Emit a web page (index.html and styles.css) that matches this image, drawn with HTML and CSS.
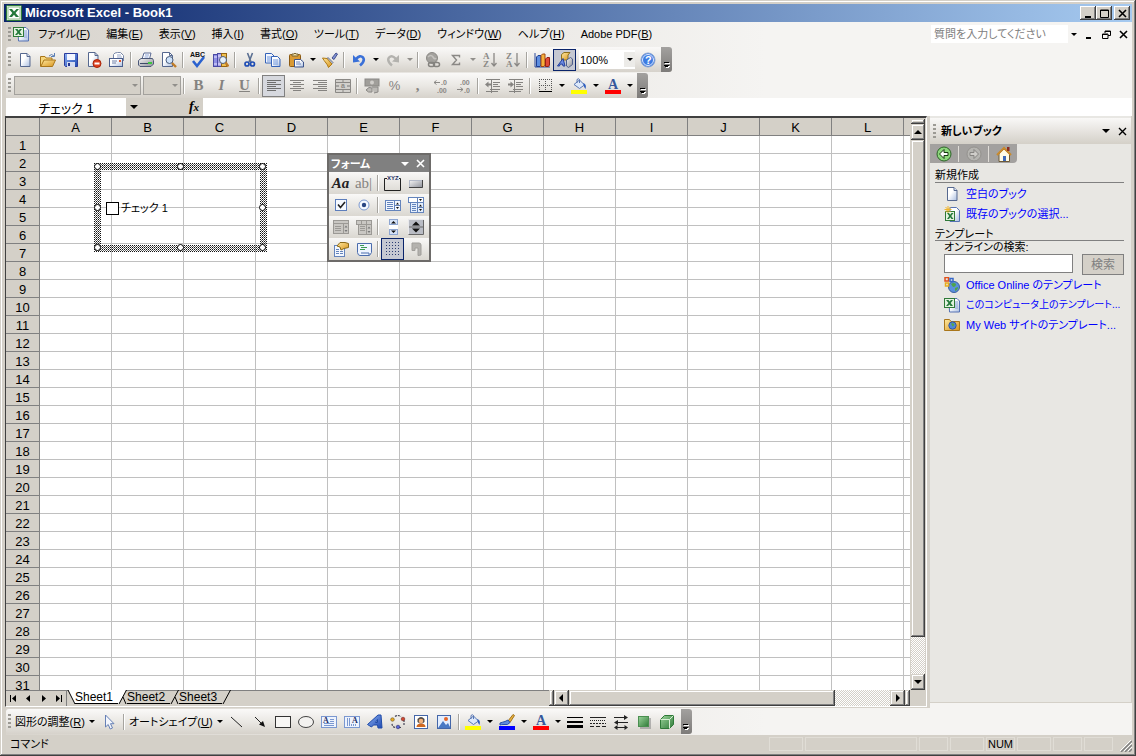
FILE: index.html
```html
<!DOCTYPE html>
<html lang="ja">
<head>
  <meta charset="UTF-8" />
  <meta name="viewport" content="width=device-width, initial-scale=1" />
  <title>Microsoft Excel - Book1</title>
  <link rel="stylesheet" href="styles.css">
</head>
<body>
  <!-- icon set -->
  <svg class="defs" width="0" height="0" aria-hidden="true">
    <defs>
      <linearGradient id="g-page" x1="0" y1="0" x2="1" y2="1"><stop offset=".4" stop-color="#fff"/><stop offset="1" stop-color="#a9bde0"/></linearGradient>
      <linearGradient id="g-blue" x1="0" y1="0" x2="1" y2="1"><stop offset="0" stop-color="#8fb4f5"/><stop offset="1" stop-color="#1c46b0"/></linearGradient>
      <linearGradient id="g-gold" x1="0" y1="0" x2="1" y2="1"><stop offset="0" stop-color="#ffe9a0"/><stop offset="1" stop-color="#d8941c"/></linearGradient>
      <linearGradient id="g-green" x1="0" y1="0" x2="1" y2="1"><stop offset="0" stop-color="#9bd49b"/><stop offset="1" stop-color="#2f7a38"/></linearGradient>
      <linearGradient id="g-gray" x1="0" y1="0" x2="1" y2="1"><stop offset="0" stop-color="#f4f4f4"/><stop offset="1" stop-color="#8c8f98"/></linearGradient>
      <pattern id="dither" width="2" height="2" patternUnits="userSpaceOnUse"><rect width="1" height="1" fill="#111"/><rect x="1" y="1" width="1" height="1" fill="#666"/></pattern>
    </defs>

    <symbol id="excel" viewBox="0 0 16 16"><rect x=".5" y=".5" width="15" height="15" rx="1" fill="#e8f3e6" stroke="#2f7a38"/><rect x="2" y="2" width="12" height="12" fill="#fff" stroke="#8ebf8c"/><path d="M3 4h3l2 2.600L10.500 4H13L9.500 8l3.500 4h-3.200L8 9.700 6 12H3l3.300-4z" fill="#23793a"/></symbol>
    <symbol id="book" viewBox="0 0 16 16"><path d="M5 1.500h8l2.500 2.500v11h-10z" fill="url(#g-page)" stroke="#5673b4"/><path d="M11 5h3M11 7h3M11 9h3M11 11h3" stroke="#8aa2d6"/><rect x=".5" y="1.500" width="10" height="9" fill="#e4f2e0" stroke="#2f7a38"/><path d="M2 3h2.500l1 1.500L7 3h2L6.700 6 9 9H6.500l-1-1.500L4 9H2l2.500-3z" fill="#23793a"/></symbol>
    <symbol id="new" viewBox="0 0 16 16"><path d="M3.500 1.500h6.500l3 3v10h-9.500z" fill="url(#g-page)" stroke="#56688f"/><path d="M10 1.500v3h3" fill="#dfe7f6" stroke="#56688f"/></symbol>
    <symbol id="open" viewBox="0 0 16 16"><path d="M.5 14.500v-10h4.500l1 1.500h6v3" fill="#f6d67c" stroke="#a9761a"/><path d="M.8 14.500L4 8h11.500l-3 6.500z" fill="url(#g-gold)" stroke="#a9761a"/><path d="M9 4q2.500-3 5 0M14.500 1v3.500H11" fill="none" stroke="#5b7fb5"/></symbol>
    <symbol id="save" viewBox="0 0 16 16"><path d="M1.500 1.500h13v13h-12l-1-1z" fill="url(#g-blue)" stroke="#2b3c9c"/><rect x="4" y="2" width="8" height="6" fill="#f3f6ff"/><rect x="4" y="10" width="8" height="5" fill="#d6dcf0"/><rect x="5" y="11" width="2" height="3" fill="#24348c"/></symbol>
    <symbol id="perm" viewBox="0 0 16 16"><path d="M2.500 .5h6.500l3 3v11h-9.500z" fill="url(#g-page)" stroke="#56688f"/><path d="M9 .5v3h3" fill="none" stroke="#56688f"/><circle cx="11" cy="11.500" r="4" fill="#dd4020" stroke="#a82408"/><rect x="8.500" y="10.500" width="5" height="2" fill="#fff"/></symbol>
    <symbol id="mail" viewBox="0 0 16 16"><path d="M4.500 6V2.500q1-2 4-2h3l3 3V9" fill="#fff" stroke="#7a89a8"/><path d="M8 3h4M8 5h5" stroke="#9aa9cc"/><rect x=".5" y="6.500" width="13" height="8" fill="url(#g-page)" stroke="#4a5d8c"/><path d="M3 9h5M3 11h4" stroke="#6d7fa8"/><rect x="10" y="8" width="2" height="2" fill="#e0552c"/></symbol>
    <symbol id="print" viewBox="0 0 16 16"><path d="M4 7l2-6h7l-1.500 6z" fill="#fff" stroke="#5a6a94"/><path d="M7 3h4M6.500 5h4" stroke="#8aa2d6"/><path d="M.5 8.500L3 6.500h11.500l1 2v3.500l-2.500 2.500H2L.5 13z" fill="url(#g-gray)" stroke="#4c5878"/><path d="M2 11.500h8" stroke="#3f4b69"/><rect x="10" y="10" width="4" height="2" fill="#3fc43f"/></symbol>
    <symbol id="preview" viewBox="0 0 16 16"><path d="M1.500 .5h7l3 3v11h-10z" fill="url(#g-page)" stroke="#56688f"/><path d="M8.500 .5v3h3" fill="none" stroke="#56688f"/><circle cx="8.500" cy="8" r="3.500" fill="#cfe3fb" stroke="#4a5d7c"/><path d="M11 11l4 4" stroke="#c07c28" stroke-width="2.400"/></symbol>
    <symbol id="research" viewBox="0 0 16 16"><rect x=".5" y="2.500" width="4" height="12" fill="#8f8fe4" stroke="#4a4aa4"/><rect x="4.500" y="1.500" width="4" height="13" fill="#a9a2e8" stroke="#4a4aa4"/><path d="M1 5h3M5 4h3M1 12h3M5 12h3" stroke="#e8e6ff"/><rect x="8.500" y="1.500" width="5" height="13" fill="#f0c050" stroke="#946414"/><circle cx="10" cy="8" r="3.500" fill="#e4f0fc" stroke="#4a5d7c"/><path d="M12.500 10.500l3 4" stroke="#c07c28" stroke-width="2.400"/></symbol>
    <symbol id="cut" viewBox="0 0 16 16"><path d="M5.500 1L9 10M10.500 1L7 10" stroke="#5b7093" stroke-width="1.600"/><circle cx="5" cy="12" r="2" fill="none" stroke="#1f4db4" stroke-width="1.700"/><circle cx="10.500" cy="12" r="2" fill="none" stroke="#1f4db4" stroke-width="1.700"/></symbol>
    <symbol id="copy" viewBox="0 0 16 16"><path d="M.5 1.500h6l2.500 2.500v7H.5z" fill="#f3f7ff" stroke="#3563b8"/><path d="M2 5h4M2 7h4M2 9h4" stroke="#6c95dc"/><path d="M6.500 4.500h6l2.500 2.500v7.500H6.500z" fill="url(#g-page)" stroke="#3563b8"/><path d="M8 8h5M8 10h5M8 12h5" stroke="#6c95dc"/></symbol>
    <symbol id="paste" viewBox="0 0 16 16"><rect x="1.500" y="2.500" width="11" height="12" rx="1" fill="#d99a35" stroke="#8c5a12"/><path d="M4 4V2h2q1-2 2 0h2v2z" fill="#f4e2a8" stroke="#7a6430"/><path d="M6.500 7.500h6l3 2.500v5h-9z" fill="url(#g-page)" stroke="#3c548c"/><path d="M8 10h4M8 12h5" stroke="#6c85bc"/></symbol>
    <symbol id="brush" viewBox="0 0 16 16"><path d="M10 6l4-5 1.500 1L12 7.500z" fill="#8495d8" stroke="#43508c"/><path d="M6 5.500l5 5-2 2L4.500 7.500z" fill="#b9c2d8" stroke="#6a7490"/><path d="M.5 6L5 6.500l5 5.500-3.500 3.500q-1-3-2.500-4.500Q2 8.500 .5 6z" fill="url(#g-gold)" stroke="#b07a14"/></symbol>
    <symbol id="undo" viewBox="0 0 16 16"><path d="M5 7q4-4.500 7-1.500 2.500 3.500-3 8" fill="none" stroke="#3a70d8" stroke-width="2.600"/><path d="M2 3v7.500l7-1z" fill="#3a70d8"/></symbol>
    <symbol id="redo" viewBox="0 0 16 16"><path d="M11 7Q7 2.500 4 5.500q-2.500 3.500 3 8" fill="none" stroke="#b3b2ae" stroke-width="2.400"/><path d="M14 3v7.500l-7-1z" fill="#b3b2ae"/></symbol>
    <symbol id="link" viewBox="0 0 16 16"><circle cx="7" cy="6" r="5.500" fill="#a3a19d" stroke="#8b8985"/><path d="M3 5q3-3 5 0t3 1" fill="none" stroke="#c4c2be" stroke-width="1.600"/><rect x="3.500" y="10.500" width="6" height="4" rx="2" fill="none" stroke="#85837f" stroke-width="1.500"/><rect x="8.500" y="10.500" width="6" height="4" rx="2" fill="none" stroke="#85837f" stroke-width="1.500"/></symbol>
    <symbol id="sum" viewBox="0 0 16 16"><path d="M11.500 5.500V3.500H4.500l4 4.500-4 4.500h7v-2" fill="none" stroke="#8a8885" stroke-width="1.400"/></symbol>
    <symbol id="chart" viewBox="0 0 16 16"><path d="M1 1v14h15" fill="none" stroke="#2e4d9c"/><path d="M2.500 5l1.500-1.500h3V13l-1 1.500H2.500z" fill="#5d8ee0" stroke="#1d3f96"/><path d="M7 3.500L8.500 2H11v11l-1 1.500H7z" fill="#f4b03c" stroke="#a4460c"/><path d="M11.500 7L13 5.500h2.500V13l-1 1.500h-3z" fill="#e04a38" stroke="#962014"/></symbol>
    <symbol id="draw" viewBox="0 0 16 16"><path d="M4.500 2.500L7 .5h6L11 3v5H4.500z" fill="url(#g-gold)" stroke="#8d701c"/><path d="M.5 14L6 6.500l2 7.500H6l-.5-2-2.500.200L2.500 14z" fill="#6d8ce4" stroke="#24409c"/><path d="M9.500 8v6l2 1.500 4-3V7l-2-1.500z" fill="url(#g-gray)" stroke="#4f5f8c"/></symbol>

    <symbol id="al" viewBox="0 0 16 16"><path d="M1 2.500h14M1 4.500h9M1 6.500h14M1 8.500h9M1 10.500h14M1 12.500h9" stroke="#6e6e6e"/></symbol>
    <symbol id="ac" viewBox="0 0 16 16"><path d="M1 2.500h14M4 4.500h8M1 6.500h14M4 8.500h8M1 10.500h14M4 12.500h8" stroke="#858380"/></symbol>
    <symbol id="ar" viewBox="0 0 16 16"><path d="M1 2.500h14M6 4.500h9M1 6.500h14M6 8.500h9M1 10.500h14M6 12.500h9" stroke="#858380"/></symbol>
    <symbol id="money" viewBox="0 0 16 16"><rect x="1" y="1" width="14" height="7" fill="#a09e9a" stroke="#8a8885"/><circle cx="8" cy="4.500" r="2" fill="#d0ceca"/><path d="M2 12q3-4 6-2v4q-4 1-6-2zM8 9h6v5l-4 1" fill="#bbb9b5" stroke="#8a8885"/></symbol>
    <symbol id="outdent" viewBox="0 0 16 16"><path d="M1 1.500h14M8 4.500h7M8 6.500h5M8 8.500h7M5 11.500h10M1 13.500h12M6.500 1v14" stroke="#858380" fill="none"/><path d="M0 6.500l3.500-3v2H6v2H3.500v2z" fill="#858380"/></symbol>
    <symbol id="indent" viewBox="0 0 16 16"><path d="M1 1.500h14M8 4.500h7M8 6.500h5M8 8.500h7M5 11.500h10M1 13.500h12M6.500 1v14" stroke="#858380" fill="none"/><path d="M6 6.500l-3.500-3v2H0v2h2.500v2z" fill="#858380"/></symbol>
    <symbol id="borders" viewBox="0 0 16 16"><path d="M2 1.500h13M2 7.500h13M2.500 1v12M8.500 1v12M14.500 1v12" stroke="#555" stroke-dasharray="1 1" fill="none"/><path d="M2 13.500h13" stroke="#000"/></symbol>
    <symbol id="fill" viewBox="0 0 16 16"><path d="M3 6.500L8.500 2l5 5-5 3.500z" fill="#dce8fa" stroke="#5877b4"/><path d="M6 5V1.500q1.500-1.500 2.500 0V5" fill="none" stroke="#5877b4"/><path d="M12 5q4 1 2.500 6-1.500-1-2-4.500z" fill="#2e5fc0"/><rect y="12" width="16" height="4" fill="#ff0"/></symbol>
    <symbol id="pen" viewBox="0 0 16 16"><path d="M9 7l5-6.500 1.500 1L11 8.500z" fill="#e8b23c" stroke="#a0701c"/><path d="M1 9q3-1 5-1.500L9 6l2 2.500q-2 3-6 2Q2 10.500 1 11z" fill="#5f8be0" stroke="#2a51a8"/><rect y="12" width="16" height="4" fill="#00f"/></symbol>

    <symbol id="cursor" viewBox="0 0 16 16"><path d="M4.500 1v12l2.700-2.500 2 4.500 2.300-1-2-4.300H13z" fill="#f3f6fd" stroke="#6680b5"/></symbol>
    <symbol id="line" viewBox="0 0 16 16"><path d="M2 3l11 10" stroke="#222"/></symbol>
    <symbol id="arrow" viewBox="0 0 16 16"><path d="M3 3l7 7" stroke="#222"/><path d="M13 13l-6-2.500L11 7z" fill="#111"/></symbol>
    <symbol id="rect" viewBox="0 0 16 16"><rect x=".5" y="2.500" width="15" height="11" fill="#f7f6f4" stroke="#333"/></symbol>
    <symbol id="oval" viewBox="0 0 16 16"><ellipse cx="8" cy="8" rx="7.500" ry="5.500" fill="#f3f2f0" stroke="#444"/></symbol>
    <symbol id="wordart" viewBox="0 0 16 16"><path d="M.5 10.500L11 1h3l1 13h-4l-.5-3H6.500l-2 2zM8.500 8.500h2V5.500z" fill="url(#g-blue)" stroke="#1f4ba8"/></symbol>
    <symbol id="cycle" viewBox="0 0 16 16"><path d="M5 2.500q3-2 6 0M14 6v5M11 13.500H9M5 13.500q-3-1-3-4" fill="none" stroke="#445" stroke-width="1.200" stroke-dasharray="2 1"/><circle cx="2.500" cy="5.500" r="1.800" fill="#e8a822" stroke="#6b5a2a" stroke-width=".6"/><circle cx="13" cy="5" r="1.800" fill="#d04830" stroke="#6b2a2a" stroke-width=".6"/><circle cx="8" cy="13" r="1.800" fill="#5866d8" stroke="#2a2a6b" stroke-width=".6"/></symbol>
    <symbol id="clip" viewBox="0 0 16 16"><rect x="1.500" y="1.500" width="13" height="13" fill="#fff" stroke="#4466a8"/><path d="M4.500 5q3.500-4 7 0v3q-3.500 3-7 0z" fill="#514a44"/><circle cx="8" cy="7" r="2.300" fill="#f3b27c"/><path d="M3.500 13q0-3.500 4.500-3.500t4.500 3.500z" fill="#d06820"/></symbol>
    <symbol id="pic" viewBox="0 0 16 16"><rect x="1.500" y="1.500" width="13" height="13" fill="#e3eeff" stroke="#4466a8"/><circle cx="10" cy="5" r="2" fill="#e46428"/><path d="M2 14l5-7 3 4 2-2 2.500 5z" fill="#4a79c4"/></symbol>
    <symbol id="lstyle" viewBox="0 0 16 16"><path d="M0 3.500h16" stroke="#000"/><path d="M0 8h16" stroke="#000" stroke-width="2"/><path d="M0 12.500h16" stroke="#000" stroke-width="3"/></symbol>
    <symbol id="dstyle" viewBox="0 0 16 16"><path d="M0 3.500h16" stroke="#222"/><path d="M0 6.500h16" stroke="#222" stroke-dasharray="1 1"/><path d="M0 9.500h16" stroke="#222" stroke-dasharray="2 1"/><path d="M0 12.500h16" stroke="#222" stroke-dasharray="4 2"/></symbol>
    <symbol id="astyle" viewBox="0 0 16 16"><path d="M1 3.500h13M2 8.500h13M2 13.500h12" stroke="#222"/><path d="M11 1l4 2.500L11 6zM5 6L1 8.500 5 11zM4.500 11L1 13.500 4.500 16zM11.500 11l3.500 2.500-3.500 2.500z" fill="#222"/></symbol>
    <symbol id="shadow" viewBox="0 0 16 16"><rect x="4" y="4" width="11" height="11" fill="#8d8d8d" opacity=".6"/><rect x="2.500" y="2.500" width="10" height="10" fill="url(#g-green)" stroke="#4a8f50"/></symbol>
    <symbol id="cube" viewBox="0 0 16 16"><path d="M1.500 5.500l4-4h9v9l-4 4h-9z" fill="url(#g-green)" stroke="#2f7a38"/><path d="M1.500 5.500h9v9M10.500 5.500l4-4" fill="none" stroke="#d9f0d6"/></symbol>

    <symbol id="fbutton" viewBox="0 0 16 16"><rect x="1.500" y="5.500" width="13" height="7" fill="url(#g-gray)" stroke="#b4bac8"/><path d="M1 12.500h13.500V5" fill="none" stroke="#444"/></symbol>
    <symbol id="fcheck" viewBox="0 0 16 16"><rect x="2.500" y="2.500" width="11" height="11" fill="#f5f9ff" stroke="#5d7ebc"/><path d="M5 7.500l2.500 3L12 5" fill="none" stroke="#222" stroke-width="1.600"/></symbol>
    <symbol id="fradio" viewBox="0 0 16 16"><circle cx="8" cy="8" r="5" fill="#f5f9ff" stroke="#7b98d0"/><circle cx="8" cy="8" r="2.200" fill="#294684"/></symbol>
    <symbol id="flist" viewBox="0 0 16 16"><rect x=".5" y="3.500" width="15" height="10" fill="#f2f7ff" stroke="#6484bc"/><path d="M2 5.500h6M2 7.500h6M2 9.500h6M2 11.500h6M9.500 4v9M10 8.500h5" stroke="#6484bc"/><path d="M11 7.500l1.500-2 1.500 2zM11 10h3l-1.500 2z" fill="#111"/></symbol>
    <symbol id="fcombo" viewBox="0 0 16 16"><rect x=".5" y=".5" width="15" height="5" fill="#fff" stroke="#6484bc"/><rect x="2.500" y="5.500" width="13" height="10" fill="#e4eefc" stroke="#6484bc"/><path d="M4 7.500h4M4 9.500h4M4 11.500h4M4 13.500h4M9.500 1v14M10 10.500h5" stroke="#6484bc"/><path d="M11 2h3l-1.500 2zM11 9.500l1.500-2 1.500 2zM11 12h3l-1.500 2z" fill="#111"/></symbol>
    <symbol id="flist-off" viewBox="0 0 16 16"><rect x=".5" y="1.500" width="15" height="13" fill="#c9c7c3" stroke="#9b9995"/><path d="M1 4.500h14M2 7.500h6M2 9.500h6M2 11.500h6M10.500 5v9" stroke="#9b9995"/><path d="M11.500 8.500l1.500-2 1.500 2zM11.500 11h3L13 13z" fill="#777"/></symbol>
    <symbol id="fcombo-off" viewBox="0 0 16 16"><rect x=".5" y="1.500" width="15" height="4" fill="#c9c7c3" stroke="#9b9995"/><rect x="2.500" y="5.500" width="13" height="10" fill="#c9c7c3" stroke="#9b9995"/><path d="M4 7.500h5M4 9.500h5M4 11.500h5M10.500 2v13M5.500 2v3" stroke="#9b9995"/><path d="M11.500 9.500l1.500-2 1.500 2zM11.500 12h3L13 14z" fill="#777"/></symbol>
    <symbol id="fscroll" viewBox="0 0 16 16"><rect x="4.500" y=".5" width="8" height="5" fill="#d5e2f6" stroke="#8ea6d2"/><rect x="4.500" y="10.500" width="8" height="5" fill="#d5e2f6" stroke="#8ea6d2"/><rect x="4" y="6" width="9" height="4" fill="#fff"/><path d="M6 4.500h5L8.500 2zM6 11.500h5L8.500 14z" fill="#111"/></symbol>
    <symbol id="fspin" viewBox="0 0 16 16"><path d="M.5 .5h15v15H.5z" fill="#b9bcc4" stroke="#e8e8ec"/><path d="M1 8h14M.5 15.500h15V1" fill="none" stroke="#666"/><path d="M4 6.500h8L8 2.500zM4 9.500h8L8 13.500z" fill="#111"/></symbol>
    <symbol id="props" viewBox="0 0 16 16"><rect x="1.500" y="4.500" width="10" height="11" fill="#f2f7ff" stroke="#6484bc"/><path d="M3 8.500h3M3 10.500h3M3 12.500h3M7 10.500h3M7 12.500h3" stroke="#6484bc"/><path d="M4 5l3-3.500h5l3.500 1v4L11 7.500 8 9 7 6z" fill="url(#g-gold)" stroke="#8c6a18"/></symbol>
    <symbol id="code" viewBox="0 0 16 16"><path d="M1.500 2.500h14v9l-2 3H4q-2 0-2.500-3z" fill="#eef4ff" stroke="#4b6cac"/><path d="M4 4.500h4M5 6.500h6M4 8.500h5" stroke="#3b9a54"/><path d="M5 12h8v2" fill="none" stroke="#4b6cac"/></symbol>
    <symbol id="fgrid" viewBox="0 0 16 16"><path d="M1 1.500h15M1 4.500h15M1 7.500h15M1 10.500h15M1 13.500h15" stroke="#2c3d72" stroke-dasharray="1 2"/></symbol>
    <symbol id="frun" viewBox="0 0 16 16"><path d="M4 2h7q2 0 2 2v10l-3 .500V7H7v2.500H4z" fill="#b4b2ae" stroke="#a09e9a"/></symbol>

    <symbol id="back" viewBox="0 0 16 16"><circle cx="8" cy="8" r="7" fill="#8cd67c" stroke="#2d6428"/><path d="M3.500 8L8 3.500V6.500h4v3H8v3z" fill="#fff" stroke="#17380f"/></symbol>
    <symbol id="fwd" viewBox="0 0 16 16"><circle cx="8" cy="8" r="7" fill="#b6b5b1" stroke="#94928e"/><path d="M12.500 8L8 3.500V6.500H4v3h4v3z" fill="#cfcdc9" stroke="#858380"/></symbol>
    <symbol id="home" viewBox="0 0 16 16"><path d="M3 8v7.500h10.500V8L8 3z" fill="#fffbe6" stroke="#6d5a38"/><path d="M1 9L8 2l7 7" fill="none" stroke="#c98a2c" stroke-width="2"/><rect x="11" y="1" width="2.500" height="4" fill="#8c2c20"/><rect x="7" y="10" width="3" height="5" fill="#3d68b8"/></symbol>
    <symbol id="pick" viewBox="0 0 16 16"><path d="M6 1.500h6.500l3 3v11H6z" fill="url(#g-page)" stroke="#5673b4"/><rect x="1.500" y="5.500" width="9" height="9" fill="#e4f2e0" stroke="#2f7a38"/><path d="M3 7h2l1.200 1.700L7.500 7h2l-2.300 3 2.300 3h-2l-1.300-1.700L5 13H3l2.200-3z" fill="#23793a"/><path d="M4 0v7M.5 3.500h7M1.500 1l5 5M6.500 1l-5 5" stroke="#f0b428"/></symbol>
    <symbol id="office" viewBox="0 0 16 16"><circle cx="10" cy="10" r="5.500" fill="#5b90dc" stroke="#3d5fa0"/><path d="M7 7q3-2 5 0 0 3-3 3zM11 11l3-1q0 3-3 4z" fill="#4fa44a"/><rect x="1" y=".500" width="3.500" height="3.500" fill="none" stroke="#e0501c" stroke-width="1.500"/><rect x="6" y="1.500" width="3" height="3" fill="none" stroke="#3868c8" stroke-width="1.500"/><rect x="1.500" y="6" width="3" height="3" fill="none" stroke="#e8ac1c" stroke-width="1.500"/></symbol>
    <symbol id="webfolder" viewBox="0 0 16 16"><path d="M.5 13.500v-11h5l1.500 2h8.500v9z" fill="url(#g-gold)" stroke="#a9761a"/><circle cx="8.500" cy="8.500" r="3.700" fill="#4f86d8" stroke="#35589c"/><path d="M7 6.500q2-1 3.500 1-1 2-2 2z" fill="#57a848"/></symbol>
  </svg>

  <div class="window">
    <header class="titlebar">
      <svg class="ic"><use href="#excel"/></svg>
      <h1>Microsoft Excel - Book1</h1>
      <div class="winbtns">
        <button aria-label="最小化"><svg width="9" height="9"><path d="M1 8h6" stroke="#000" stroke-width="2"/></svg></button>
        <button aria-label="最大化"><svg width="9" height="9"><path d="M.5 1h8v7.500h-8zM0 1.500h9" fill="none" stroke="#000"/></svg></button>
        <button class="close" aria-label="閉じる"><svg width="9" height="9"><path d="M1 1l7 7M8 1L1 8" stroke="#000" stroke-width="1.600"/></svg></button>
      </div>
    </header>

    <div class="bars">
      <nav class="menubar">
        <span class="grip"></span>
        <svg class="ic"><use href="#book"/></svg>
        <div class="menus">
          <button>ファイル(<u>F</u>)</button>
          <button>編集(<u>E</u>)</button>
          <button>表示(<u>V</u>)</button>
          <button>挿入(<u>I</u>)</button>
          <button>書式(<u>O</u>)</button>
          <button>ツール(<u>T</u>)</button>
          <button>データ(<u>D</u>)</button>
          <button>ウィンドウ(<u>W</u>)</button>
          <button>ヘルプ(<u>H</u>)</button>
          <button>Adobe PDF(<u>B</u>)</button>
        </div>
        <div class="ask">
          <input type="text" aria-label="質問" placeholder="質問を入力してください">
          <button class="dd" aria-label="質問の一覧"></button>
        </div>
        <div class="docbtns">
          <button aria-label="ブックの最小化"><svg width="9" height="9"><path d="M1 8h5" stroke="#000" stroke-width="2"/></svg></button>
          <button aria-label="ブックを元に戻す"><svg width="9" height="9"><path d="M3 3V1h5.500v4.500H6M.5 4h5.500v4.500H.5zM3 1.500h5M.5 4.500h5" fill="none" stroke="#000"/></svg></button>
          <button aria-label="ブックを閉じる"><svg width="9" height="9"><path d="M1 1l7 7M8 1L1 8" stroke="#000" stroke-width="1.600"/></svg></button>
        </div>
      </nav>

      <div class="toolbar">
        <span class="grip"></span>
        <button class="tb" aria-label="新規作成"><svg class="ic"><use href="#new"/></svg></button>
        <button class="tb" aria-label="開く"><svg class="ic"><use href="#open"/></svg></button>
        <button class="tb" aria-label="上書き保存"><svg class="ic"><use href="#save"/></svg></button>
        <button class="tb" aria-label="アクセス許可"><svg class="ic"><use href="#perm"/></svg></button>
        <button class="tb" aria-label="電子メール"><svg class="ic"><use href="#mail"/></svg></button>
        <span class="sep"></span>
        <button class="tb" aria-label="印刷"><svg class="ic"><use href="#print"/></svg></button>
        <button class="tb" aria-label="印刷プレビュー"><svg class="ic"><use href="#preview"/></svg></button>
        <span class="sep"></span>
        <button class="tb" aria-label="スペル チェック"><svg class="ic big" viewBox="0 0 18 18"><text x="1" y="6" class="abc">ABC</text><path d="M4 10l4 5 7-9" fill="none" stroke="#2b62cf" stroke-width="2.600"/></svg></button>
        <button class="tb" aria-label="リサーチ"><svg class="ic"><use href="#research"/></svg></button>
        <span class="sep"></span>
        <button class="tb" aria-label="切り取り"><svg class="ic"><use href="#cut"/></svg></button>
        <button class="tb" aria-label="コピー"><svg class="ic"><use href="#copy"/></svg></button>
        <button class="tb" aria-label="貼り付け"><svg class="ic"><use href="#paste"/></svg></button>
        <button class="dd" aria-label="貼り付けの一覧"></button>
        <button class="tb" aria-label="書式のコピー"><svg class="ic"><use href="#brush"/></svg></button>
        <span class="sep"></span>
        <button class="tb" aria-label="元に戻す"><svg class="ic"><use href="#undo"/></svg></button>
        <button class="dd" aria-label="元に戻すの一覧"></button>
        <button class="tb" aria-label="やり直し"><svg class="ic"><use href="#redo"/></svg></button>
        <button class="dd off" aria-label="やり直しの一覧"></button>
        <span class="sep"></span>
        <button class="tb" aria-label="ハイパーリンク"><svg class="ic"><use href="#link"/></svg></button>
        <button class="tb" aria-label="オート SUM"><svg class="ic"><use href="#sum"/></svg></button>
        <button class="dd off" aria-label="オート SUM の一覧"></button>
        <button class="tb" aria-label="昇順"><svg class="ic" viewBox="0 0 16 16"><text x="1" y="7" class="ser">A</text><text x="1" y="15" class="ser">Z</text><path d="M12 1v12M9.500 11l2.500 3 2.500-3" fill="none" stroke="#8a8885" stroke-width="1.300"/></svg></button>
        <button class="tb" aria-label="降順"><svg class="ic" viewBox="0 0 16 16"><text x="1" y="7" class="ser">Z</text><text x="1" y="15" class="ser">A</text><path d="M12 1v12M9.500 11l2.500 3 2.500-3" fill="none" stroke="#8a8885" stroke-width="1.300"/></svg></button>
        <span class="sep"></span>
        <button class="tb" aria-label="グラフ"><svg class="ic"><use href="#chart"/></svg></button>
        <button class="tb on" aria-label="図形描画"><svg class="ic"><use href="#draw"/></svg></button>
        <div class="combo zoom">
          <input type="text" aria-label="ズーム" value="100%">
          <button class="dd" aria-label="ズームの一覧"></button>
        </div>
        <button class="tb" aria-label="ヘルプ"><svg class="ic" viewBox="0 0 16 16"><circle cx="8" cy="8" r="7" fill="#3d7be2" stroke="#8aa4d0"/><circle cx="8" cy="8" r="5.500" fill="none" stroke="#dbe8ff"/><text x="5" y="12" class="q">?</text></svg></button>
        <button class="cap" aria-label="ツール バー オプション"></button>
      </div>

      <div class="toolbar">
        <span class="grip"></span>
        <div class="combo dim font">
          <input type="text" aria-label="フォント" disabled>
          <button class="dd off" aria-label="フォントの一覧" disabled></button>
        </div>
        <div class="combo dim size">
          <input type="text" aria-label="フォント サイズ" disabled>
          <button class="dd off" aria-label="サイズの一覧" disabled></button>
        </div>
        <span class="sep"></span>
        <button class="tb ltr">B</button>
        <button class="tb ltr"><i>I</i></button>
        <button class="tb ltr"><u>U</u></button>
        <span class="sep"></span>
        <button class="tb on off" aria-label="左揃え"><svg class="ic"><use href="#al"/></svg></button>
        <button class="tb" aria-label="中央揃え"><svg class="ic"><use href="#ac"/></svg></button>
        <button class="tb" aria-label="右揃え"><svg class="ic"><use href="#ar"/></svg></button>
        <button class="tb" aria-label="セルを結合して中央揃え"><svg class="ic" viewBox="0 0 16 16"><path d="M.5 1.500h15v13H.5zM.5 4.500h15M.5 11.500h15M8 1.500v3M8 11.500v3" fill="#d2d0cc" stroke="#8a8885"/><text x="6" y="10" class="num">a</text><path d="M1 8h3M12 8h3" stroke="#777"/></svg></button>
        <span class="sep"></span>
        <button class="tb" aria-label="通貨スタイル"><svg class="ic"><use href="#money"/></svg></button>
        <button class="tb pct">%</button>
        <button class="tb ltr">,</button>
        <button class="tb" aria-label="小数点表示桁上げ"><svg class="ic" viewBox="0 0 16 16"><text x="8" y="7" class="num">.0</text><text x="4" y="15" class="num">.00</text><path d="M1 4.500h6M3.500 2.500l-2.500 2 2.500 2" fill="none" stroke="#8a8885"/></svg></button>
        <button class="tb" aria-label="小数点表示桁下げ"><svg class="ic" viewBox="0 0 16 16"><text x="4" y="7" class="num">.00</text><text x="8" y="15" class="num">.0</text><path d="M1 11.500h6M4.500 9.500l2.500 2-2.500 2" fill="none" stroke="#8a8885"/></svg></button>
        <span class="sep"></span>
        <button class="tb" aria-label="インデント解除"><svg class="ic"><use href="#outdent"/></svg></button>
        <button class="tb" aria-label="インデント"><svg class="ic"><use href="#indent"/></svg></button>
        <span class="sep"></span>
        <button class="tb" aria-label="罫線"><svg class="ic"><use href="#borders"/></svg></button>
        <button class="dd" aria-label="罫線の一覧"></button>
        <button class="tb" aria-label="塗りつぶしの色"><svg class="ic"><use href="#fill"/></svg></button>
        <button class="dd" aria-label="塗りつぶしの色の一覧"></button>
        <button class="tb" aria-label="フォントの色"><svg class="ic" viewBox="0 0 16 16"><text x="3" y="11" class="biga">A</text><rect y="12" width="16" height="4" fill="#f00"/></svg></button>
        <button class="dd" aria-label="フォントの色の一覧"></button>
        <button class="cap" aria-label="ツール バー オプション"></button>
      </div>
    </div>

    <div class="formulabar">
      <input class="namebox" type="text" aria-label="名前ボックス" value="チェック 1">
      <button class="dd" aria-label="名前の一覧"></button>
      <button class="fx" aria-label="関数の挿入"><i>f<small>x</small></i></button>
      <input class="formula" type="text" aria-label="数式バー">
    </div>

    <main class="work">
      <section class="book">
        <div class="sheetrow">
          <div class="sheet">
            <table class="grid">
              <thead><tr id="cols"><th class="corner"></th></tr></thead>
              <tbody id="rows"></tbody>
            </table>

            <div class="control">
              <svg width="173" height="89">
                <path d="M0 0h173v89H0zM7 7v75h159V7z" fill="url(#dither)" fill-rule="evenodd"/>
                <g fill="#fff" stroke="#000">
                  <circle cx="3.500" cy="3.500" r="3"/><circle cx="86.500" cy="3.500" r="3"/><circle cx="168.500" cy="3.500" r="3"/>
                  <circle cx="3.500" cy="44.500" r="3"/><circle cx="168.500" cy="44.500" r="3"/>
                  <circle cx="3.500" cy="84.500" r="3"/><circle cx="86.500" cy="84.500" r="3"/><circle cx="168.500" cy="84.500" r="3"/>
                </g>
              </svg>
              <label><input type="checkbox">チェック 1</label>
            </div>

            <div class="forms">
              <div class="forms-title"><span>フォーム</span><button class="dd" aria-label="オプション"></button><button class="x" aria-label="閉じる"><svg width="9" height="9"><path d="M1 1l7 7M8 1L1 8" stroke="#fff" stroke-width="1.600"/></svg></button></div>
              <div class="forms-row">
                <button class="tb aa"><i>Aa</i></button>
                <button class="tb ab">ab|</button>
                <span class="sep"></span>
                <button class="tb" aria-label="グループ ボックス"><svg class="ic big" viewBox="0 0 18 18"><path d="M3 4.500H.5v12h16v-12H15" fill="none" stroke="#222"/><text x="3" y="6" class="xyz">XYZ</text></svg></button>
                <button class="tb" aria-label="ボタン"><svg class="ic"><use href="#fbutton"/></svg></button>
              </div>
              <div class="forms-row">
                <button class="tb" aria-label="チェック ボックス"><svg class="ic"><use href="#fcheck"/></svg></button>
                <button class="tb" aria-label="オプション ボタン"><svg class="ic"><use href="#fradio"/></svg></button>
                <span class="sep"></span>
                <button class="tb" aria-label="リスト ボックス"><svg class="ic"><use href="#flist"/></svg></button>
                <button class="tb" aria-label="コンボ ボックス"><svg class="ic"><use href="#fcombo"/></svg></button>
              </div>
              <div class="forms-row">
                <button class="tb" aria-label="コンボ リスト"><svg class="ic"><use href="#flist-off"/></svg></button>
                <button class="tb" aria-label="コンボ ドロップダウン"><svg class="ic"><use href="#fcombo-off"/></svg></button>
                <span class="sep"></span>
                <button class="tb" aria-label="スクロール バー"><svg class="ic"><use href="#fscroll"/></svg></button>
                <button class="tb" aria-label="スピン ボタン"><svg class="ic"><use href="#fspin"/></svg></button>
              </div>
              <div class="forms-row">
                <button class="tb" aria-label="コントロールのプロパティ"><svg class="ic"><use href="#props"/></svg></button>
                <button class="tb" aria-label="コードの編集"><svg class="ic"><use href="#code"/></svg></button>
                <span class="sep"></span>
                <button class="tb on" aria-label="グリッドの表示切り替え"><svg class="ic"><use href="#fgrid"/></svg></button>
                <button class="tb" aria-label="ダイアログの実行"><svg class="ic"><use href="#frun"/></svg></button>
              </div>
            </div>
          </div>
          <div class="vscroll">
            <span class="split"></span>
            <button class="up" aria-label="上へ"></button>
            <div class="track"><div class="thumb"></div></div>
            <button class="down" aria-label="下へ"></button>
          </div>
        </div>

        <div class="tabrow">
          <div class="tabnav">
            <button aria-label="先頭のシート"><svg width="9" height="9"><path d="M1.500 1v7" stroke="#000"/><path d="M7 1v7L3 4.500z"/></svg></button>
            <button aria-label="前のシート"><svg width="9" height="9"><path d="M6 1v7L2 4.500z"/></svg></button>
            <button aria-label="次のシート"><svg width="9" height="9"><path d="M3 1v7l4-3.500z"/></svg></button>
            <button aria-label="最後のシート"><svg width="9" height="9"><path d="M7.500 1v7" stroke="#000"/><path d="M2 1v7l4-3.500z"/></svg></button>
          </div>
          <div class="tabs">
            <svg width="8" height="15"><path d="M1 0h7v14z" fill="#fff"/><path d="M1 0l7 14" stroke="#000"/></svg>
            <button class="tab current">Sheet1</button>
            <svg width="9" height="15"><path d="M0 0h8L1 14H0z" fill="#fff"/><path d="M8.500 0L1 14M5 7l3 7" stroke="#000" fill="none"/></svg>
            <button class="tab">Sheet2</button>
            <svg width="9" height="15"><path d="M8.500 0L1 14M5 7l3 7" stroke="#000" fill="none"/></svg>
            <button class="tab">Sheet3</button>
            <svg width="9" height="15"><path d="M8.500 0L1 14" stroke="#000"/></svg>
          </div>
          <div class="hscroll">
            <span class="split"></span>
            <button class="left" aria-label="左へ"></button>
            <div class="track"><div class="thumb"></div></div>
            <button class="right" aria-label="右へ"></button>
            <span class="split"></span>
          </div>
        </div>
      </section>

      <aside class="pane">
        <div class="pane-body">
          <div class="pane-head">
            <span class="grip"></span>
            <h2>新しいブック</h2>
            <button class="dd" aria-label="作業ウィンドウの一覧"></button>
            <button class="x" aria-label="閉じる"><svg width="9" height="9"><path d="M1 1l7 7M8 1L1 8" stroke="#000" stroke-width="1.400"/></svg></button>
          </div>
          <div class="pane-nav">
            <button aria-label="戻る"><svg class="ic"><use href="#back"/></svg></button>
            <span class="sep"></span>
            <button aria-label="進む"><svg class="ic"><use href="#fwd"/></svg></button>
            <span class="sep"></span>
            <button aria-label="ホーム"><svg class="ic"><use href="#home"/></svg></button>
          </div>
          <h3>新規作成</h3>
          <ul>
            <li><svg class="ic"><use href="#new"/></svg><a href="#">空白のブック</a></li>
            <li><svg class="ic"><use href="#pick"/></svg><a href="#">既存のブックの選択...</a></li>
          </ul>
          <h3>テンプレート</h3>
          <label class="find-label" for="find">オンラインの検索:</label>
          <form class="find">
            <input id="find" type="text">
            <button type="button" disabled>検索</button>
          </form>
          <ul>
            <li><svg class="ic"><use href="#office"/></svg><a href="#">Office Online のテンプレート</a></li>
            <li><svg class="ic"><use href="#book"/></svg><a href="#" class="long">このコンピュータ上のテンプレート...</a></li>
            <li><svg class="ic"><use href="#webfolder"/></svg><a href="#">My Web サイトのテンプレート...</a></li>
          </ul>
        </div>
      </aside>
    </main>

    <div class="drawrow">
      <div class="toolbar">
        <span class="grip"></span>
        <button class="txt">図形の調整(<u>R</u>)</button>
        <button class="dd" aria-label="図形の調整の一覧"></button>
        <button class="tb" aria-label="オブジェクトの選択"><svg class="ic"><use href="#cursor"/></svg></button>
        <span class="sep"></span>
        <button class="txt">オートシェイプ(<u>U</u>)</button>
        <button class="dd" aria-label="オートシェイプの一覧"></button>
        <button class="tb" aria-label="直線"><svg class="ic"><use href="#line"/></svg></button>
        <button class="tb" aria-label="矢印"><svg class="ic"><use href="#arrow"/></svg></button>
        <button class="tb" aria-label="四角形"><svg class="ic"><use href="#rect"/></svg></button>
        <button class="tb" aria-label="楕円"><svg class="ic"><use href="#oval"/></svg></button>
        <button class="tb" aria-label="テキスト ボックス"><svg class="ic" viewBox="0 0 16 16"><rect x=".5" y="2.500" width="15" height="11" fill="#eef3fd" stroke="#7b98d0"/><text x="2" y="9" class="boxa">A</text><path d="M9 5.500h4M9 7.500h4M3 9.500h10M3 11.500h10" stroke="#7b98d0"/></svg></button>
        <button class="tb" aria-label="縦書きテキスト ボックス"><svg class="ic" viewBox="0 0 16 16"><rect x=".5" y="2.500" width="15" height="11" fill="#eef3fd" stroke="#7b98d0"/><text x="8" y="9" class="boxa">A</text><path d="M3.500 4v8M5.500 4v8M7.500 10v2M9.500 10v2M11.500 10v2" stroke="#7b98d0"/></svg></button>
        <button class="tb" aria-label="ワードアート"><svg class="ic"><use href="#wordart"/></svg></button>
        <button class="tb" aria-label="図表"><svg class="ic"><use href="#cycle"/></svg></button>
        <button class="tb" aria-label="クリップアート"><svg class="ic"><use href="#clip"/></svg></button>
        <button class="tb" aria-label="図の挿入"><svg class="ic"><use href="#pic"/></svg></button>
        <span class="sep"></span>
        <button class="tb" aria-label="塗りつぶしの色"><svg class="ic"><use href="#fill"/></svg></button>
        <button class="dd" aria-label="塗りつぶしの色の一覧"></button>
        <button class="tb" aria-label="線の色"><svg class="ic"><use href="#pen"/></svg></button>
        <button class="dd" aria-label="線の色の一覧"></button>
        <button class="tb" aria-label="フォントの色"><svg class="ic" viewBox="0 0 16 16"><text x="3" y="11" class="biga">A</text><rect y="12" width="16" height="4" fill="#f00"/></svg></button>
        <button class="dd" aria-label="フォントの色の一覧"></button>
        <button class="tb" aria-label="線の太さ"><svg class="ic"><use href="#lstyle"/></svg></button>
        <button class="tb" aria-label="破線"><svg class="ic"><use href="#dstyle"/></svg></button>
        <button class="tb" aria-label="矢印の種類"><svg class="ic"><use href="#astyle"/></svg></button>
        <button class="tb" aria-label="影付き"><svg class="ic"><use href="#shadow"/></svg></button>
        <button class="tb" aria-label="3-D"><svg class="ic"><use href="#cube"/></svg></button>
        <button class="cap" aria-label="ツール バー オプション"></button>
      </div>
    </div>

    <footer class="status">
      <span class="msg">コマンド</span>
      <span class="cell w34"></span>
      <span class="cell w112"></span>
      <span class="cell w28"></span>
      <span class="cell w34"></span>
      <span class="cell w28">NUM</span>
      <span class="cell w34"></span>
      <span class="cell w28"></span>
      <span class="cell w28"></span>
      <svg class="resize" width="12" height="12"><path d="M1 12L12 1M5 12l7-7M9 12l3-3" stroke="#808080" stroke-width="1.500"/><path d="M0 11L11 0M4 11l8-8M8 11l4-4" stroke="#fff"/></svg>
    </footer>
  </div>

  <script src="script.js"></script>
</body>
</html>
```
FILE: styles.css
```css
* { box-sizing: border-box; }

body {
  margin: 0;
  font-family: "Liberation Sans", "Noto Sans CJK JP", sans-serif;
  font-size: 11px;
  line-height: 16px;
  font-feature-settings: "palt";
  color: #000;
  background: #d4d0c8;
}

h1, h2, h3, ul { margin: 0; padding: 0; font-size: 11px; }
ul { list-style: none; }

button, input {
  font: inherit;
  font-feature-settings: inherit;
  color: inherit;
  margin: 0;
  padding: 0;
  border: 0;
  border-radius: 0;
  background: none;
}

button {
  display: flex;
  align-items: center;
  justify-content: center;
  flex: none;
  white-space: nowrap;
}

svg { display: block; flex: none; }
.defs { position: absolute; }
.ic { width: 16px; height: 16px; }
.ic.big { width: 18px; height: 18px; }

/* letters inside icons */
.ser { font: bold 9px "Liberation Serif", serif; fill: #8a8885; }
.num { font: bold 7px "Liberation Sans", sans-serif; fill: #8a8885; }
.abc { font: bold 7px "Liberation Sans", sans-serif; fill: #111; }
.xyz { font: bold 6px "Liberation Sans", sans-serif; fill: #1d2e66; }
.q { font: bold 11px "Liberation Sans", sans-serif; fill: #fff; }
.biga { font: bold 14px "Liberation Serif", serif; fill: #35579c; }
.boxa { font: bold 8px "Liberation Serif", serif; fill: #1d2e66; }

.window {
  height: 100vh;
  padding: 4px;
  display: flex;
  flex-direction: column;
  box-shadow: inset -1px -1px #404040, inset 1px 1px #d4d0c8, inset -2px -2px #808080, inset 2px 2px #fff;
}

/* title bar */
.titlebar {
  height: 18px;
  flex: none;
  display: flex;
  align-items: center;
  gap: 3px;
  padding: 0 2px;
  background: linear-gradient(to right, #0a246a, #a6caf0);
  color: #fff;
}

.titlebar h1 { flex: 1; font-size: 13px; }
.winbtns { display: flex; }

.winbtns button {
  width: 16px;
  height: 14px;
  background: #d4d0c8;
  box-shadow: inset -1px -1px #404040, inset 1px 1px #fff, inset -2px -2px #808080;
}

.winbtns .close { margin-left: 2px; }

/* menu and toolbars */
.bars {
  flex: none;
  display: flex;
  flex-direction: column;
  gap: 1px;
  margin-left: 2px;
  background: linear-gradient(to right, #d8d4cd, #f5f4f2 760px);
}

.menubar {
  height: 24px;
  display: flex;
  align-items: center;
  padding-right: 4px;
}

.menus { flex: 1; display: flex; gap: 16px; padding-left: 9px; }

.grip {
  width: 3px;
  height: 15px;
  flex: none;
  margin: 0 2px;
  background: repeating-linear-gradient(#9c9a94 0 2px, transparent 2px 4px);
}

.ask { display: flex; height: 18px; width: 148px; background: #fff; }
.ask input { flex: 1; min-width: 0; padding-left: 3px; }
.ask input::placeholder { color: #808080; }
.ask .dd { background: #f5f4f2; height: 18px; }
.docbtns { display: flex; gap: 7px; padding-left: 5px; }
.docbtns button { width: 10px; height: 16px; }

.toolbar {
  align-self: flex-start;
  display: flex;
  align-items: center;
  height: 25px;
  border-radius: 3px;
  background: linear-gradient(#faf9f8, #eae8e4 50%, #d6d2cb);
}

.tb { width: 23px; height: 22px; }
.tb.on { background: #c5c8d2; border: 1px solid #0a246a; }
.tb.on.off { background: #d6d8de; border-color: #808080; }
.txt { padding: 0 2px; }
.ltr { font: bold 15px "Liberation Serif", serif; color: #858380; }
.pct { font-size: 13px; color: #858380; }

.sep {
  width: 6px;
  height: 16px;
  flex: none;
  border-left: 2px solid transparent;
  background: linear-gradient(to right, #a6a49f 1px, #fff 1px 2px, transparent 2px) padding-box;
}

.dd { width: 11px; height: 16px; }
.dd::before {
  content: "";
  border: 3px solid transparent;
  border-top-color: #000;
  border-bottom: 0;
}
.dd.off::before { border-top-color: #918f8b; }

.combo { display: flex; align-items: center; height: 19px; background: #fff; flex: none; }
.combo input { flex: 1; min-width: 0; height: 16px; }
.combo.zoom { width: 56px; margin: 0 1px 0 3px; padding-left: 1px; }
.combo.zoom .dd { background: #ecebe8; height: 15px; }
.combo.dim { background: #d4d0c8; border: 1px solid #a3a19d; }
.combo.font { width: 127px; margin: 0 2px 0 1px; }
.combo.size { width: 38px; }

.cap {
  width: 11px;
  height: 25px;
  margin-left: 2px;
  align-items: flex-end;
  padding-bottom: 4px;
  border-radius: 0 3px 3px 0;
  background: linear-gradient(#a3a19f, #7d7b79);
}

.cap::before {
  content: "";
  width: 6px;
  height: 6px;
  background:
    linear-gradient(#000, #000) 0 0 / 5px 1px no-repeat,
    linear-gradient(#fff, #fff) 1px 1px / 5px 1px no-repeat,
    linear-gradient(#000, #000) 0 3px / 5px 1px no-repeat,
    linear-gradient(#000, #000) 1px 4px / 3px 1px no-repeat,
    linear-gradient(#fff, #fff) 4px 4px / 2px 1px no-repeat,
    linear-gradient(#fff, #fff) 2px 5px / 3px 1px no-repeat;
}

/* formula bar */
.formulabar {
  height: 18px;
  flex: none;
  display: flex;
  align-items: center;
  margin-left: 2px;
}

.formulabar input { height: 18px; background: #fff; }
.formulabar .namebox { width: 120px; text-align: center; font-size: 13px; }
.formulabar .dd { width: 16px; }
.formulabar .dd::before { border-width: 4px; border-bottom: 0; }
.fx { margin-left: 40px; width: 21px; padding-left: 3px; font: bold 14px "Liberation Serif", serif; }
.fx small { font-size: 11px; }
.formula { flex: 1; min-width: 0; }

/* workbook */
.work { flex: 1; min-height: 0; display: flex; padding-left: 1px; }

.book {
  flex: 1;
  min-width: 0;
  display: flex;
  flex-direction: column;
  border-top: 2px solid #404040;
  border-left: 1px solid #404040;
  border-right: 1px solid #fff;
  border-bottom: 1px solid #fff;
  margin-bottom: 1px;
}

.sheetrow { flex: 1; min-height: 0; display: flex; }
.sheet { flex: 1; min-width: 0; position: relative; overflow: hidden; background: #fff; }

.grid {
  table-layout: fixed;
  width: 970px;
  border-spacing: 0;
  font-size: 13px;
  line-height: 15px;
}

.grid th, .grid td {
  width: 72px;
  height: 18px;
  padding: 2px 0 0;
  border-right: 1px solid #c0c0c0;
  border-bottom: 1px solid #c0c0c0;
}

.grid th {
  font-weight: normal;
  background: #d4d0c8;
  border-color: #808080;
}

.grid tbody th, .grid .corner { width: 34px; }

.control { position: absolute; left: 88px; top: 45px; }

.control label {
  position: absolute;
  left: 12px;
  top: 37px;
  display: flex;
  align-items: center;
  gap: 2px;
  white-space: nowrap;
}

.control input {
  appearance: none;
  width: 13px;
  height: 13px;
  background: #fff;
  border: 1px solid #000;
}

/* floating forms toolbar */
.forms {
  position: absolute;
  left: 321px;
  top: 35px;
  width: 104px;
  border: 2px solid #6d6b69;
  background: #f4f3f1;
}

.forms-title {
  display: flex;
  align-items: center;
  height: 17px;
  padding: 0 2px;
  background: #808080;
  color: #fff;
  font-weight: bold;
}

.forms-title span { flex: 1; }
.forms-title .dd { width: 18px; }
.forms-title .dd::before { border-width: 4px; border-bottom: 0; border-top-color: #fff; }
.x { width: 13px; height: 13px; }

.forms-row {
  display: flex;
  align-items: center;
  height: 22px;
  background: linear-gradient(#f9f8f7, #dad7d1);
}

.aa { font: bold 15px "Liberation Serif", serif; color: #222; }
.ab { font: 15px "Liberation Serif", serif; color: #858380; }

/* scroll bars */
.track {
  flex: 1;
  min-width: 0;
  min-height: 0;
  background: repeating-conic-gradient(#fff 0 25%, #d4d0c8 0 50%) 0 0 / 2px 2px;
}

.thumb, .vscroll button, .hscroll button, .split {
  flex: none;
  background: #d4d0c8;
  box-shadow: inset -1px -1px #404040, inset 1px 1px #d4d0c8, inset -2px -2px #808080, inset 2px 2px #fff;
}

.vscroll {
  width: 16px;
  display: flex;
  flex-direction: column;
  padding: 1px 1px 0;
  background: #d4d0c8;
}

.vscroll .split { height: 5px; }
.vscroll button { width: 14px; height: 16px; }
.vscroll .thumb { height: 93%; }
.vscroll button::before, .hscroll button::before { content: ""; border: 4px solid transparent; }
.vscroll .up::before { border-top: 0; border-bottom-color: #000; }
.vscroll .down::before { border-bottom: 0; border-top-color: #000; }
.hscroll .left::before { border-left: 0; border-right-color: #000; }
.hscroll .right::before { border-right: 0; border-left-color: #000; }

.tabrow { height: 16px; flex: none; display: flex; }
.tabnav { display: flex; border-top: 1px solid #808080; border-right: 1px solid #808080; }
.tabnav button { width: 15px; height: 15px; }
.tabs { flex: 1; min-width: 0; display: flex; font-size: 12px; background: linear-gradient(#808080, #808080) 0 0 / 100% 1px no-repeat; }
.tab { height: 14px; padding: 0 5px 0 0; border-bottom: 1px solid #000; }
.tab.current { background: #fff; }
.hscroll { flex: 0 0 41%; display: flex; }
.hscroll .split { width: 5px; }
.hscroll button { width: 15px; height: 16px; }
.hscroll .thumb { width: 83%; height: 16px; }
.hscroll .split:last-child { margin-right: 16px; }

/* task pane */
.pane { width: 205px; flex: none; padding-bottom: 5px; background: #f5f4f2; border-left: 3px solid #d4d0c8; }

.pane-body {
  height: 100%;
  padding-top: 2px;
  background: #e8e7e3;
  border-right: 1px solid #d4d0c8;
  border-bottom: 1px solid #d4d0c8;
}

.pane-head {
  display: flex;
  align-items: center;
  height: 26px;
  padding: 0 2px 0 1px;
  background: linear-gradient(#f9f8f7, #d4d0c8);
}

.pane-head h2 { flex: 1; padding-left: 3px; }
.pane-head .dd { width: 20px; }
.pane-head .dd::before { border-width: 4px; border-bottom: 0; }

.pane-nav {
  display: inline-flex;
  align-items: center;
  height: 19px;
  background: #a3a19f;
  border-radius: 0 0 4px 0;
  vertical-align: top;
}

.pane-nav button { width: 27px; }
.pane-nav .sep { width: 3px; border-left: 1px solid transparent; background: linear-gradient(to right, #e0ddd8 1px, transparent 1px) padding-box; }

.pane h3 {
  height: 18px;
  margin: 2px 7px 1px 5px;
  padding-top: 2px;
  font-weight: normal;
  border-bottom: 1px solid #808080;
}

.pane ul { padding-left: 14px; }
.pane li { display: flex; align-items: center; gap: 6px; height: 20px; white-space: nowrap; }
.pane a { color: #00f; text-decoration: none; }
.pane .long { font-size: 10px; }
.pane ul + h3 { height: 17px; margin-top: 0; margin-bottom: 0; }
.find-label { display: block; padding-left: 14px; height: 13px; line-height: 13px; }
.find { display: flex; gap: 9px; padding: 0 7px 0 14px; height: 21px; }
.find input { flex: 1; min-width: 0; height: 19px; background: #fff; border: 1px solid #808080; }
.find button { width: 42px; height: 21px; background: #d4d0c8; border: 1px solid #808080; color: #808080; font-size: 12px; }

/* drawing toolbar and status bar */
.drawrow {
  flex: none;
  display: flex;
  margin-left: 2px;
  padding: 1px 0;
  background: linear-gradient(to right, #d8d4cd, #f5f4f2 760px);
}

.status {
  height: 17px;
  flex: none;
  display: flex;
  align-items: center;
  gap: 2px;
  padding-left: 6px;
}

.msg { flex: 1; }
.cell { height: 14px; line-height: 12px; text-align: center; border: 1px solid #e0ddd6; }
.w28 { width: 29px; }
.w34 { width: 34px; }
.w112 { width: 112px; }
.resize { margin-left: 5px; align-self: flex-end; }
```
FILE: script.js
```js
// column headings A..L, the last column is only partly visible
const letters = "ABCDEFGHIJKL".split("").concat("");
const cols = document.getElementById("cols");
const rows = document.getElementById("rows");

letters.forEach(l => {
  const th = document.createElement("th");
  th.textContent = l;
  cols.appendChild(th);
});

for (let r = 1; r <= 31; r++) {
  const tr = document.createElement("tr");
  const th = document.createElement("th");
  th.textContent = r;
  tr.appendChild(th);
  letters.forEach(() => tr.appendChild(document.createElement("td")));
  rows.appendChild(tr);
}
```
